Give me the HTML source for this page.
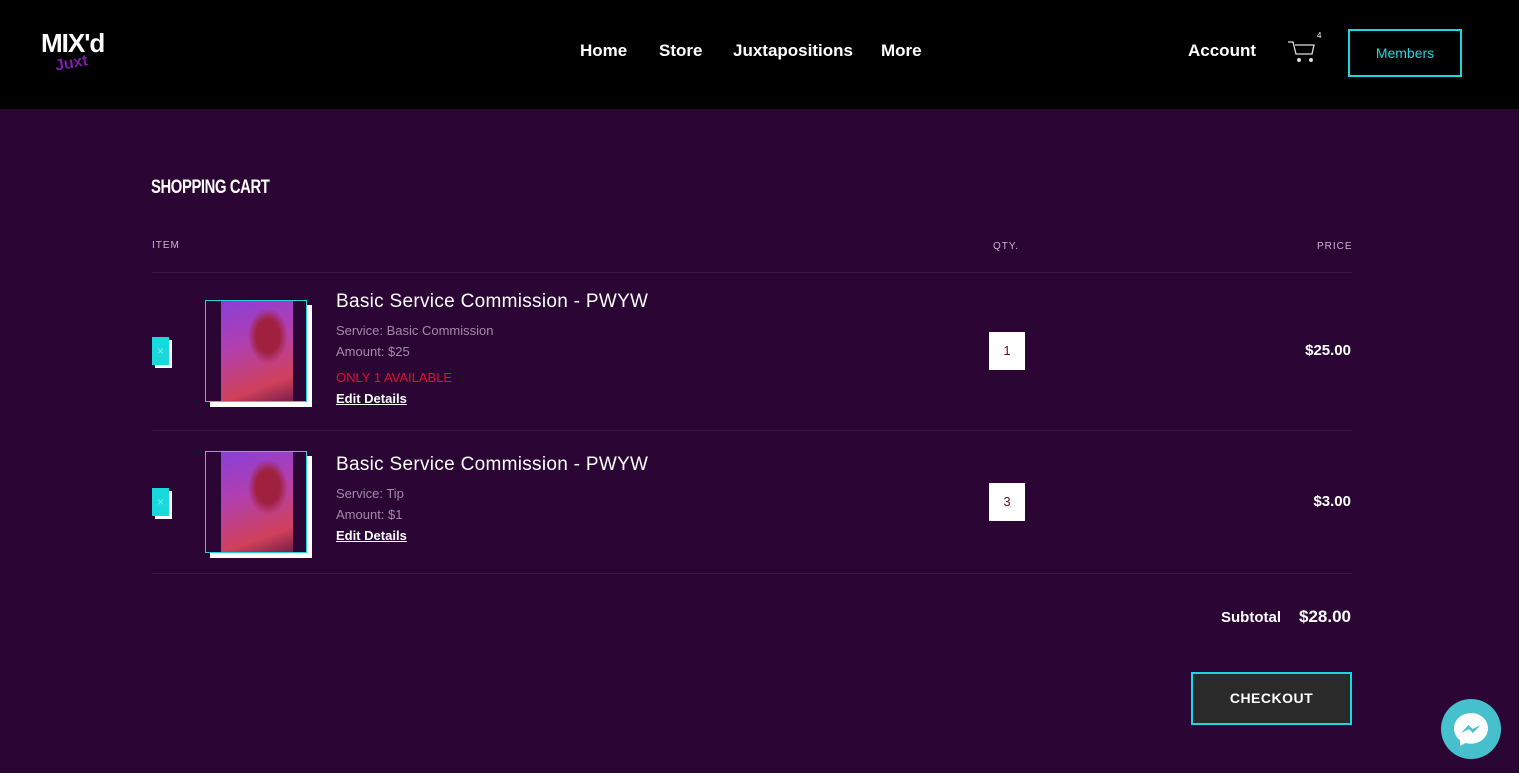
<!DOCTYPE html>
<html><head><style>
*{margin:0;padding:0;box-sizing:border-box}
body{width:1519px;height:773px;overflow:hidden;background:#2b0635;font-family:"Liberation Sans",sans-serif;color:#fff;position:relative}
.hdr{position:absolute;left:0;top:0;width:1519px;height:109px;background:#000}
.nav a{position:absolute;top:41px;font-size:17px;font-weight:bold;color:#fff}
.a{position:absolute}
.th{font-size:10px;color:#c9b3cf;letter-spacing:1px}
.line{position:absolute;left:152px;width:1200px;height:1px;background:#3c1846}
.img{position:absolute;width:102px;height:102px}
.img .sh{position:absolute;left:5px;top:5px;width:102px;height:102px;background:#fff}
.img .fr{position:absolute;left:0;top:0;width:102px;height:102px;border:1px solid #22d3d8;background:#2b0635}
.img .ph{position:absolute;left:15px;top:0;width:72px;height:100px;background:radial-gradient(ellipse at 65% 35%,#a0203f 0 18%,transparent 30%),linear-gradient(160deg,#8a3fd8,#b03fb0 40%,#d0405a 80%,#7a1e4a)}
.x{position:absolute;width:17px;height:28px}
.x .s{position:absolute;left:3px;top:3px;width:17px;height:28px;background:#fff}
.x .f{position:absolute;left:0;top:0;width:17px;height:28px;background:#1ad9dc;color:#7ee;font-size:12px;text-align:center;line-height:28px}
.t{font-size:19px;letter-spacing:.3px}
.g{font-size:13px;color:#a08aa8}
.ed{font-size:13px;font-weight:bold;text-decoration:underline}
.q{position:absolute;left:989px;width:36px;height:38px;background:#fff;color:#611;font-size:13px;text-align:center;line-height:38px}
.p{position:absolute;right:168px;font-size:15px;font-weight:bold}
</style></head><body>
<div class="hdr">
<div class="a" style="left:41px;top:28px;font-size:26px;font-weight:bold;letter-spacing:-1px">MIX'd</div>
<div class="a" style="left:55px;top:55px;font-size:16px;font-weight:bold;color:#7a1fa8;transform:rotate(-10deg)">Juxt</div>
<div class="nav"><a style="left:580px">Home</a><a style="left:659px">Store</a><a style="left:733px">Juxtapositions</a><a style="left:881px">More</a><a style="left:1188px">Account</a></div>
<svg class="a" style="left:1287px;top:38px" width="32" height="26" viewBox="0 0 32 26" fill="none" stroke="#ddd" stroke-width="1.3"><path d="M1 4h5l3 12h16l2-9H8"/><circle cx="12" cy="22" r="1.3" fill="#ddd"/><circle cx="24" cy="22" r="1.3" fill="#ddd"/></svg>
<div class="a" style="left:1317px;top:31px;font-size:8px">4</div>
<div class="a" style="left:1348px;top:29px;width:114px;height:48px;border:2px solid #1ad9dc;color:#1ad9dc;font-size:14px;text-align:center;line-height:44px">Members</div>
</div>
<div class="a" style="left:151px;top:177px;font-size:19px;font-weight:bold;letter-spacing:-.5px;transform:scaleX(.78);transform-origin:left">SHOPPING CART</div>
<div class="a th" style="left:152px;top:240px">ITEM</div>
<div class="a th" style="left:993px;top:241px">QTY.</div>
<div class="a th" style="left:1317px;top:241px">PRICE</div>
<div class="line" style="top:272px"></div>
<div class="line" style="top:430px"></div>
<div class="line" style="top:573px"></div>

<div class="x" style="left:152px;top:337px"><div class="s"></div><div class="f">×</div></div>
<div class="img" style="left:205px;top:300px"><div class="sh"></div><div class="fr"><div class="ph"></div></div></div>
<div class="a t" style="left:336px;top:291px">Basic Service Commission - PWYW</div>
<div class="a g" style="left:336px;top:323px">Service: Basic Commission</div>
<div class="a g" style="left:336px;top:344px">Amount: $25</div>
<div class="a" style="left:336px;top:370px;font-size:13px;color:#e0102a">ONLY 1 AVAILABLE</div>
<div class="a ed" style="left:336px;top:391px">Edit Details</div>
<div class="q" style="top:332px">1</div>
<div class="p" style="top:342px">$25.00</div>

<div class="x" style="left:152px;top:488px"><div class="s"></div><div class="f">×</div></div>
<div class="img" style="left:205px;top:451px"><div class="sh"></div><div class="fr"><div class="ph"></div></div></div>
<div class="a t" style="left:336px;top:454px">Basic Service Commission - PWYW</div>
<div class="a g" style="left:336px;top:486px">Service: Tip</div>
<div class="a g" style="left:336px;top:507px">Amount: $1</div>
<div class="a ed" style="left:336px;top:528px">Edit Details</div>
<div class="q" style="top:483px">3</div>
<div class="p" style="top:493px">$3.00</div>

<div class="a" style="left:1221px;top:609px;font-size:15px;font-weight:bold">Subtotal</div>
<div class="p" style="top:607px;font-size:17px">$28.00</div>
<div class="a" style="left:1191px;top:672px;width:161px;height:53px;border:2px solid #1ad9dc;background:#2a2a2a;font-size:14px;font-weight:bold;letter-spacing:.5px;text-align:center;line-height:49px">CHECKOUT</div>
<div class="a" style="left:1441px;top:699px;width:60px;height:60px;border-radius:50%;background:#45c0cc">
<svg width="60" height="60" viewBox="0 0 60 60"><path d="M30 14c-9.5 0-17 7-17 15.5 0 4.8 2.4 9 6 11.8V47l5.5-3c1.7.5 3.6.7 5.5.7 9.5 0 17-7 17-15.5S39.5 14 30 14z" fill="#fff"/><path d="M20 34l7.5-8 4 4 8-4-7.5 8-4-4z" fill="#45c0cc"/></svg></div>
</body></html>
